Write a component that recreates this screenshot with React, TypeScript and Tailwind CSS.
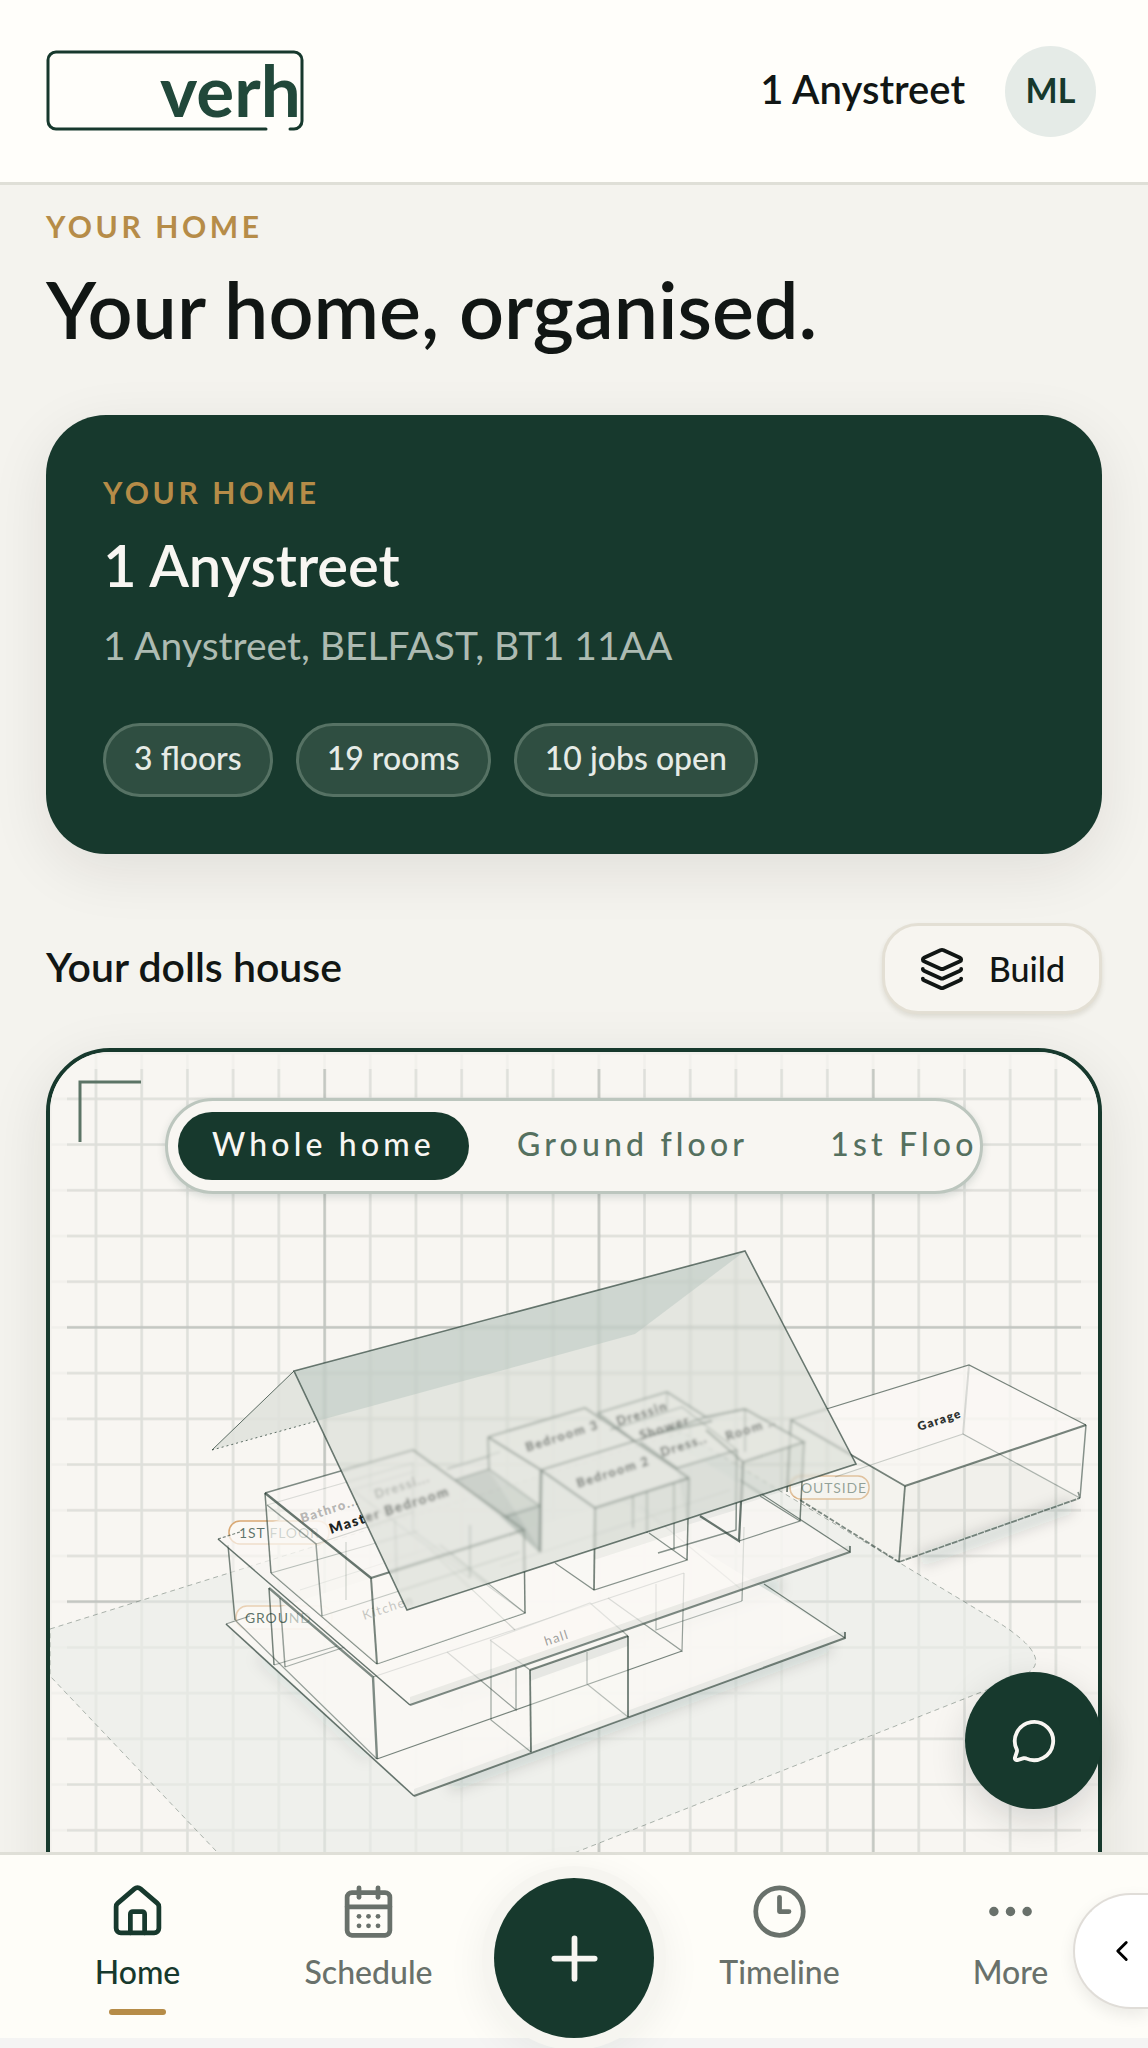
import { useState } from 'react';
import {
  CalendarDays,
  ChevronLeft,
  Clock3,
  Ellipsis,
  House,
  Layers,
  MessageCircle,
  Plus,
  type LucideIcon
} from 'lucide-react';
import clsx from 'clsx';

const INK = '#17392d';
const PENCIL = '#1f362c';

const CHIPS = ['3 floors', '19 rooms', '10 jobs open'];
const FLOORS = ['Whole home', 'Ground floor', '1st Floor'];

interface NavItem {
  label: string;
  icon: LucideIcon;
}

const NAV_LEFT: NavItem[] = [
  { label: 'Home', icon: House },
  { label: 'Schedule', icon: CalendarDays }
];

const NAV_RIGHT: NavItem[] = [
  { label: 'Timeline', icon: Clock3 },
  { label: 'More', icon: Ellipsis }
];

interface Face {
  points: string;
  fill?: string;
  opacity?: number;
}

interface Edge {
  d: string;
  width?: number;
  opacity?: number;
  dash?: string;
}

interface RoomLabel {
  text: string;
  x: number;
  y: number;
  opacity?: number;
  size?: number;
  weight?: number;
}

interface Level {
  faces: Face[];
  edges: Edge[];
  labels: RoomLabel[];
}

const PAPER = '#faf8f4';

const GROUND: Level = {
  faces: [
    { points: '226,1624 414,1796 845,1638 620,1500', fill: PAPER, opacity: 0.85 },
    { points: '414,1796 845,1638 845,1631 414,1789', fill: INK, opacity: 0.06 },
    { points: '228,1545 373,1677 377,1759 235,1620', fill: PAPER, opacity: 0.5 },
    { points: '373,1677 684,1573 682,1651 377,1759', fill: PAPER, opacity: 0.5 }
  ],
  edges: [
    { d: 'M226 1624 414 1796', width: 1.6, opacity: 0.9 },
    { d: 'M414 1796 845 1638V1632', width: 2, opacity: 0.8 },
    { d: 'M764 1584 845 1638', opacity: 0.8 },
    { d: 'M226 1624 250 1616M235 1620 377 1759' },
    { d: 'M228 1545 235 1620', width: 1.5, opacity: 0.8 },
    { d: 'M269 1588 274 1665', width: 1.5, opacity: 0.8 },
    { d: 'M280 1598 285 1667', width: 1.5 },
    { d: 'M269 1588 373 1677 377 1759', width: 2.4, opacity: 0.75 },
    { d: 'M377 1759 682 1651', opacity: 0.8 },
    { d: 'M274 1665 337 1646M285 1667 345 1647', opacity: 0.5 },
    { d: 'M373 1677 684 1573', opacity: 0.5 },
    { d: 'M684 1573 682 1651 608 1598', opacity: 0.6 },
    { d: 'M656 1584V1630L742 1601', opacity: 0.45 },
    { d: 'M744 1527 742 1601', opacity: 0.6 },
    { d: 'M742 1590 640 1506', opacity: 0.25 },
    { d: 'M447 1652 516 1710V1667', opacity: 0.6 },
    { d: 'M491 1640V1720L531 1752', opacity: 0.55 },
    { d: 'M587 1684V1652M587 1684 628 1717', opacity: 0.6 }
  ],
  labels: []
};

const GROUND_HALL: Level = {
  faces: [
    { points: '490,1640 590,1603 628,1636 530,1670', fill: PAPER, opacity: 0.6 },
    { points: '530,1670 628,1636 628,1717 531,1752', fill: PAPER, opacity: 0.35 },
    { points: '530,1670 628,1636 628,1646 530,1681', fill: INK, opacity: 0.08 }
  ],
  edges: [
    { d: 'M490 1640 530 1670', opacity: 0.6 },
    { d: 'M490 1640 590 1603 628 1636', opacity: 0.45 },
    { d: 'M530 1670 628 1636', width: 2.2, opacity: 0.8 },
    { d: 'M530 1670 531 1752', width: 1.8, opacity: 0.85 },
    { d: 'M628 1636V1717', width: 1.8, opacity: 0.85 }
  ],
  labels: []
};

const FIRST: Level = {
  faces: [
    { points: '218,1539 410,1705 850,1552 625,1413', fill: PAPER, opacity: 0.68 },
    { points: '410,1705 850,1552 850,1545 410,1697', fill: INK, opacity: 0.07 }
  ],
  edges: [
    { d: 'M218 1539 410 1705', width: 1.5, opacity: 0.9 },
    { d: 'M410 1705 850 1552V1546', width: 2, opacity: 0.75 },
    { d: 'M218 1539 240 1532', opacity: 0.8, dash: '3 2' },
    { d: 'M447 1469 500 1452', opacity: 0.5 },
    { d: 'M740 1480 850 1552', opacity: 0.8 },
    { d: 'M271 1573 418 1531', opacity: 0.6 },
    { d: 'M322 1616 520 1552', opacity: 0.5 },
    { d: 'M271 1573 377 1664', opacity: 0.8 },
    { d: 'M377 1664 525 1613 440 1545', opacity: 0.75 },
    { d: 'M430 1550 515 1630', opacity: 0.25 },
    { d: 'M300 1590 440 1545', opacity: 0.15 },
    { d: 'M500 1566 730 1490', opacity: 0.15 }
  ],
  labels: [
    { text: 'Kitchen', x: 364, y: 1620, opacity: 0.35, weight: 500 },
    { text: 'hall', x: 546, y: 1646, opacity: 0.4, weight: 500 }
  ]
};

const FIRST_ROOMS: Level = {
  faces: [
    // master bedroom
    { points: '265,1493 371,1578 377,1664 271,1573', fill: PAPER, opacity: 0.35 },
    { points: '371,1578 524,1530 525,1613 377,1664', fill: PAPER, opacity: 0.35 },
    { points: '265,1493 413,1450 524,1530 371,1578', fill: PAPER, opacity: 0.65 },
    // stairwell in shadow
    { points: '455,1480 489,1469 540,1506 540,1553 500,1516', fill: INK, opacity: 0.2 },
    { points: '500,1516 540,1503 540,1553', fill: INK, opacity: 0.15 },
    // bedrooms 2 and 3
    { points: '488,1437 541,1470 541,1552 489,1470', fill: PAPER, opacity: 0.35 },
    { points: '488,1437 585,1408 628,1443 541,1470', fill: PAPER, opacity: 0.6 },
    { points: '541,1470 628,1443 689,1478 595,1508', fill: PAPER, opacity: 0.5 },
    { points: '541,1470 595,1508 594,1590 540,1552', fill: PAPER, opacity: 0.3 },
    { points: '595,1508 689,1478 687,1530 594,1560', fill: INK, opacity: 0.05 },
    // right-hand rooms
    { points: '598,1413 667,1392 706,1417 635,1441', fill: PAPER, opacity: 0.6 },
    { points: '635,1441 706,1417 737,1450 677,1468', fill: PAPER, opacity: 0.5 },
    { points: '677,1468 737,1450 736,1510 687,1525', fill: INK, opacity: 0.06 },
    { points: '690,1428 745,1409 804,1442 743,1462', fill: PAPER, opacity: 0.6 },
    { points: '743,1462 804,1442 802,1485 741,1505', fill: INK, opacity: 0.05 }
  ],
  edges: [
    { d: 'M265 1493 413 1450', opacity: 0.75, width: 1.5 },
    { d: 'M413 1450 524 1530 371 1578', opacity: 0.8, width: 2 },
    { d: 'M371 1578 265 1493', opacity: 0.9, width: 2.4 },
    { d: 'M265 1493 271 1573', opacity: 0.8, width: 1.5 },
    { d: 'M371 1578 377 1664', opacity: 0.8, width: 2 },
    { d: 'M524 1530 525 1613', opacity: 0.8, width: 1.5 },
    { d: 'M267 1505 316 1544 322 1616', opacity: 0.6, width: 1.5 },
    { d: 'M267 1505 413 1463V1531L525 1613', opacity: 0.2 },
    { d: 'M316 1544 413 1512M346 1542V1600M395 1520 397 1585', opacity: 0.25 },
    { d: 'M352 1490 470 1578M352 1490 413 1472', opacity: 0.15 },
    { d: 'M470 1525V1578', opacity: 0.3, width: 2 },
    { d: 'M447 1469 489 1457', opacity: 0.4 },
    { d: 'M455 1480 489 1469 540 1506 505 1517', opacity: 0.6, width: 1.5 },
    { d: 'M488 1437 585 1408 689 1478', opacity: 0.8, width: 1.8 },
    { d: 'M488 1437 541 1470 595 1508 689 1478', opacity: 0.9, width: 2 },
    { d: 'M541 1470 635 1441', opacity: 0.85, width: 1.8 },
    { d: 'M488 1437 489 1470', opacity: 0.7, width: 1.8 },
    { d: 'M541 1470 540 1552', opacity: 0.9, width: 2.8 },
    { d: 'M555 1563 594 1590 687 1560 649 1533', opacity: 0.7 },
    { d: 'M595 1508 594 1590', opacity: 0.8, width: 1.8 },
    { d: 'M689 1478 687 1560', opacity: 0.8, width: 1.5 },
    { d: 'M633 1497V1528M647 1492V1533M674 1484V1550', opacity: 0.55, width: 1.5 },
    { d: 'M598 1413 667 1392 706 1417 635 1441Z', opacity: 0.75, width: 1.8 },
    { d: 'M610 1430 682 1407 737 1450', opacity: 0.5, width: 1.5 },
    { d: 'M667 1392V1410', opacity: 0.5 },
    { d: 'M648 1436 712 1421M640 1442 677 1468 737 1450', opacity: 0.75, width: 1.8 },
    { d: 'M737 1450 736 1530 658 1553', opacity: 0.7, width: 1.5 },
    { d: 'M706 1417 745 1409 804 1442 743 1462 706 1430', opacity: 0.8, width: 1.8 },
    { d: 'M745 1409V1452', opacity: 0.5, width: 1.5 },
    { d: 'M743 1462 739 1541 700 1516', opacity: 0.9, width: 2.2 },
    { d: 'M804 1442 800 1521', opacity: 0.8, width: 1.5 },
    { d: 'M739 1541 800 1521 760 1496', opacity: 0.7 }
  ],
  labels: [
    { text: 'Bathro...', x: 302, y: 1523, opacity: 0.3 },
    { text: 'Dressi...', x: 376, y: 1499, opacity: 0.35 },
    { text: 'Master Bedroom', x: 331, y: 1534, opacity: 0.95, size: 14 },
    { text: 'Bedroom 3', x: 527, y: 1452, opacity: 0.95 },
    { text: 'Bedroom 2', x: 578, y: 1488, opacity: 0.95 },
    { text: 'Dressin', x: 618, y: 1426, opacity: 0.95 },
    { text: 'Shower', x: 641, y: 1440, opacity: 0.95 },
    { text: 'Dress..', x: 662, y: 1457, opacity: 0.95 },
    { text: 'Room ..', x: 727, y: 1441, opacity: 0.9 }
  ]
};

const GARAGE: Level = {
  faces: [
    { points: '963,1434 1080,1498 899,1562 787,1492', fill: INK, opacity: 0.03 },
    { points: '791,1420 969,1365 1086,1425 905,1486', fill: PAPER, opacity: 0.8 },
    { points: '791,1420 905,1486 899,1562 787,1492', fill: PAPER, opacity: 0.35 }
  ],
  edges: [
    { d: 'M969 1365 963 1434', opacity: 0.2, width: 2 },
    { d: 'M963 1434 1080 1498', opacity: 0.45 },
    { d: 'M963 1434 835 1477', opacity: 0.3 },
    { d: 'M791 1420 969 1365 1086 1425', opacity: 0.8 },
    { d: 'M1086 1425 905 1486', opacity: 0.8, width: 2 },
    { d: 'M905 1486 791 1420 787 1492', opacity: 0.8, width: 1.8 },
    { d: 'M905 1486 899 1562', opacity: 0.8, width: 1.8 },
    { d: 'M1086 1425 1080 1498 1078 1492', opacity: 0.7, width: 1.5 },
    { d: 'M899 1562 1080 1498', opacity: 0.75, width: 1.8, dash: '6 1' },
    { d: 'M800 1500 899 1562', opacity: 0.75, width: 1.8, dash: '5 2' }
  ],
  labels: [{ text: 'Garage', x: 919, y: 1431, opacity: 0.9, size: 12 }]
};

function LevelDrawing({ faces, edges, labels }: Level) {
  return (
    <g>
      {faces.map((face) => (
        <polygon key={face.points} points={face.points} fill={face.fill} fillOpacity={face.opacity} />
      ))}
      {edges.map((edge) => (
        <path
          key={edge.d}
          d={edge.d}
          fill="none"
          stroke={PENCIL}
          strokeWidth={edge.width ?? 1.2}
          strokeOpacity={(edge.opacity ?? 0.6) * 0.75}
          strokeDasharray={edge.dash}
        />
      ))}
      {labels.map((label) => (
        <text
          key={label.text}
          x={label.x}
          y={label.y}
          transform={`rotate(-18 ${label.x} ${label.y})`}
          fontSize={label.size ?? 13}
          fontWeight={label.weight ?? 800}
          fill="#111614"
          fillOpacity={label.opacity}
          className="tracking-[0.1em]"
        >
          {label.text}
        </text>
      ))}
    </g>
  );
}

function TagOutline({ x, y, width }: { x: number; y: number; width: number }) {
  return <rect x={x} y={y} width={width} height={23} rx={11} fill={PAPER} stroke="#d9a873" strokeWidth={1.5} />;
}

// The end of a tag can disappear behind the walls next to it
function TagText({ text, faded, x, y }: { text: string; faded?: string; x: number; y: number }) {
  return (
    <text x={x} y={y} fontSize={14} fill={INK} fillOpacity={0.7} className="tracking-[0.06em]">
      {text}
      {faded && <tspan fillOpacity={0.3}>{faded}</tspan>}
    </text>
  );
}

const ROOF = '294,1371 745,1251 856,1464 407,1610';
const PLOT = 'M50 1629 245 1568 682 1432 993 1619Q1060 1660 1022 1676L574 1853 330 1970 217 1852 50 1676Z';

function DollsHouse() {
  return (
    <svg viewBox="50 1052 1048 1000" className="block w-full" role="img" aria-label="Dolls house drawing">
      <defs>
        <pattern id="minor" x="94.5" y="1097.4" width="45.71" height="45.71" patternUnits="userSpaceOnUse">
          <path d="M1.5 0V46M0 1.5H46" stroke={PENCIL} strokeOpacity="0.09" strokeWidth="2.6" />
        </pattern>
        <pattern id="major" x="323.3" y="1325.8" width="274.3" height="274.3" patternUnits="userSpaceOnUse">
          <path d="M1.5 0V275M0 1.5H275" stroke={PENCIL} strokeOpacity="0.15" strokeWidth="2.6" />
        </pattern>
        <filter id="soft" x="-10%" y="-10%" width="120%" height="120%">
          <feGaussianBlur stdDeviation="1.4" />
        </filter>
        <filter id="shade" x="-20%" y="-60%" width="140%" height="220%">
          <feGaussianBlur stdDeviation="7" />
        </filter>
        <clipPath id="roof">
          <polygon points={ROOF} />
        </clipPath>
        <g id="scene">
          <rect x="50" y="1052" width="1048" height="1000" fill="#f8f6f2" />
          <rect x="50" y="1052" width="1048" height="1000" fill="url(#minor)" opacity="0.35" />
          <rect x="67" y="1069" width="1014" height="966" fill="url(#minor)" />
          <rect x="67" y="1069" width="1014" height="966" fill="url(#major)" />
          <path d={PLOT} fill="#e9ece8" fillOpacity="0.65" />
          <path d={PLOT} fill="none" stroke={PENCIL} strokeOpacity="0.35" strokeDasharray="5 4" />
          <g filter="url(#shade)" stroke={INK} strokeWidth="14" strokeOpacity="0.15">
            <path d="M450 1785 830 1645" />
            <path d="M920 1560 1072 1506" />
            <path d="M440 1702 780 1584" />
            <path d="M260 1655 370 1757" strokeOpacity="0.08" />
          </g>
          <TagOutline x={790} y={1476} width={79} />
          <TagText text="OUTSIDE" x={801} y={1493} />
          <LevelDrawing {...GARAGE} />
          <TagOutline x={236} y={1606} width={96} />
          <LevelDrawing {...GROUND} />
          <TagText text="GROU" faded="ND" x={245} y={1623} />
          <LevelDrawing {...GROUND_HALL} />
          <TagOutline x={229} y={1521} width={100} />
          <LevelDrawing {...FIRST} />
          <TagText text="1ST" faded=" FLOOR" x={239} y={1538} />
          <LevelDrawing {...FIRST_ROOMS} />
        </g>
      </defs>

      <use href="#scene" />

      {/* Rear slope sticks out on the left, the front one is frosted glass */}
      <polygon points="294,1371 212,1450 317,1421" fill="#dfe2dc" fillOpacity="0.85" />
      <path d="M294 1371 212 1450" stroke={PENCIL} strokeOpacity="0.7" />
      <path d="M212 1450 317 1421" stroke={PENCIL} strokeOpacity="0.7" strokeDasharray="2 3" />
      <g clipPath="url(#roof)">
        <use href="#scene" filter="url(#soft)" />
        <polygon points={ROOF} fill="#cdd2c9" fillOpacity="0.45" />
        <polygon points="294,1371 745,1251 635,1334 317,1421" fill="#b4c4bc" fillOpacity="0.45" />
      </g>
      <polygon points={ROOF} fill="none" stroke={PENCIL} strokeOpacity="0.65" strokeWidth="1.6" />

      <path d="M80 1142V1082H141" fill="none" stroke="#5c7466" strokeWidth="3" />
    </svg>
  );
}

function Logo() {
  return (
    <svg viewBox="0 0 258 82" className="w-[258px] overflow-visible" role="img" aria-label="verho">
      <path
        d="M220 79H10a8 8 0 0 1-8-8V10a8 8 0 0 1 8-8h238a8 8 0 0 1 8 8v61a8 8 0 0 1-8 8h-4"
        fill="none"
        stroke={INK}
        strokeWidth="3"
        strokeLinecap="round"
      />
      <text x="114" y="67" fontSize="71" fontWeight="700" fill="#21483a">
        verh
      </text>
    </svg>
  );
}

function NavButton({ item, active, onSelect }: { item: NavItem; active: boolean; onSelect: () => void }) {
  const Icon = item.icon;
  return (
    <button
      type="button"
      onClick={onSelect}
      aria-current={active ? 'page' : undefined}
      className={clsx('flex flex-col items-center text-[32px] leading-10 font-medium', active ? 'text-[#17392d]' : 'text-[#69716b]')}
    >
      <Icon size={57} />
      <span className="mt-3">{item.label}</span>
      {active && <span className="mt-[17px] h-1.5 w-[57px] rounded-full bg-[#b68c48]" />}
    </button>
  );
}

export default function App() {
  const [floor, setFloor] = useState('Whole home');
  const [tab, setTab] = useState('Home');

  return (
    <div className="flex h-screen flex-col overflow-hidden bg-[#f4f3ee] font-[Lato,sans-serif] text-[#111614]">
      <header className="flex h-[185px] shrink-0 items-center justify-between border-b-3 border-[#dfdfd7] bg-[#fffefa] px-[46px]">
        <a href="#home">
          <Logo />
        </a>
        <div className="flex items-center gap-10 pr-1.5">
          <span className="pb-1 text-[40px] leading-12 font-semibold">1 Anystreet</span>
          <button
            type="button"
            className="size-[91px] rounded-full bg-[#e5ebe7] pb-1 text-[34px] font-bold text-[#17392d]"
          >
            ML
          </button>
        </div>
      </header>

      <div className="relative min-h-0 flex-1">
        <main className="h-full overflow-hidden px-[46px] pt-[21px]">
          <p className="text-[30px] leading-10 font-bold tracking-[0.12em] text-[#b68c48]">YOUR HOME</p>
          <h1 className="mt-[19px] text-[79px] leading-[88px] font-semibold">Your home, organised.</h1>

          <section className="mt-[62px] rounded-[60px] bg-[#17392d] p-[57px] shadow-[0_16px_60px_rgba(30,25,20,0.09)]">
            <p className="text-[30px] leading-10 font-bold tracking-[0.12em] text-[#b68c48]">YOUR HOME</p>
            <h2 className="mt-[19px] text-[58px] leading-[68px] font-semibold text-[#f8f6f2]">1 Anystreet</h2>
            <p className="mt-[22px] text-[39px] leading-12 text-[#adbbb2]">1 Anystreet, BELFAST, BT1 11AA</p>
            <ul className="mt-[54px] flex flex-wrap gap-[23px]">
              {CHIPS.map((chip) => (
                <li
                  key={chip}
                  className="rounded-full border-3 border-[#567264] bg-[#2f4e41] px-7 pt-3 pb-4 text-[32px] leading-10 font-medium text-[#e6ebe6]"
                >
                  {chip}
                </li>
              ))}
            </ul>
          </section>

          <div className="mt-[69px] flex items-center justify-between">
            <h2 className="pb-1 text-[41px] leading-12 font-semibold">Your dolls house</h2>
            <button
              type="button"
              className="flex items-center gap-6 rounded-[36px] border-3 border-[#e3dfd4] bg-[#f7f5f0] px-[34px] py-[18px] text-[34px] leading-[49px] font-medium shadow-[0_3px_5px_rgba(60,50,20,0.12)]"
            >
              <Layers size={46} />
              Build
            </button>
          </div>

          <section className="relative mt-[34px] overflow-hidden rounded-[64px] border-4 border-[#17392d] shadow-[0_16px_60px_rgba(30,25,20,0.1)]">
            <DollsHouse />
            <div className="absolute inset-x-[115px] top-[46px] rounded-full border-3 border-[#bcc6be] bg-[#f8f6f2] py-[11px] pr-1.5 pl-2.5 shadow-[0_3px_8px_rgba(23,57,45,0.15)]">
              <div className="flex gap-3.5 overflow-hidden">
                {FLOORS.map((name) => (
                  <button
                    key={name}
                    type="button"
                    onClick={() => setFloor(name)}
                    className={clsx(
                      'shrink-0 rounded-full px-[34px] pb-1 text-[32px] leading-16 font-medium tracking-[0.13em]',
                      name === floor ? 'bg-[#17392d] text-[#f8f6f2]' : 'text-[#55705f]'
                    )}
                  >
                    {name}
                  </button>
                ))}
              </div>
            </div>
          </section>
        </main>

        <button
          type="button"
          aria-label="Open chat"
          className="absolute right-[46px] bottom-[43px] flex size-[137px] items-center justify-center rounded-full bg-[#17392d] text-[#f8f6f2] shadow-[0_12px_36px_rgba(20,30,25,0.15)]"
        >
          <MessageCircle size={46} />
        </button>
      </div>

      <nav className="relative grid h-[186px] shrink-0 grid-cols-[1fr_1fr_180px_1fr_1fr] items-start border-t-3 border-[#dfdfd7] bg-[#fefdf8] px-[22px] pt-7">
        {NAV_LEFT.map((item) => (
          <NavButton key={item.label} item={item} active={tab === item.label} onSelect={() => setTab(item.label)} />
        ))}
        <button
          type="button"
          aria-label="Add"
          className="-mt-[5px] flex size-40 items-center justify-center justify-self-center rounded-full bg-[#17392d] text-[#f8f6f2] shadow-[0_0_0_12px_#f6f5f0,0_8px_40px_12px_rgba(20,30,25,0.06)]"
        >
          <Plus size={69} />
        </button>
        {NAV_RIGHT.map((item) => (
          <NavButton key={item.label} item={item} active={tab === item.label} onSelect={() => setTab(item.label)} />
        ))}
        <button
          type="button"
          aria-label="Open panel"
          className="absolute top-[38px] right-0 flex h-[116px] w-[75px] items-center justify-center rounded-l-full border-2 border-r-0 border-[#e0ddd8] bg-white pl-5 text-black shadow-[0_6px_16px_rgba(0,0,0,0.08)]"
        >
          <ChevronLeft size={34} />
        </button>
      </nav>
      <div className="h-2.5 shrink-0 bg-[#f4f4f3]" />
    </div>
  );
}
